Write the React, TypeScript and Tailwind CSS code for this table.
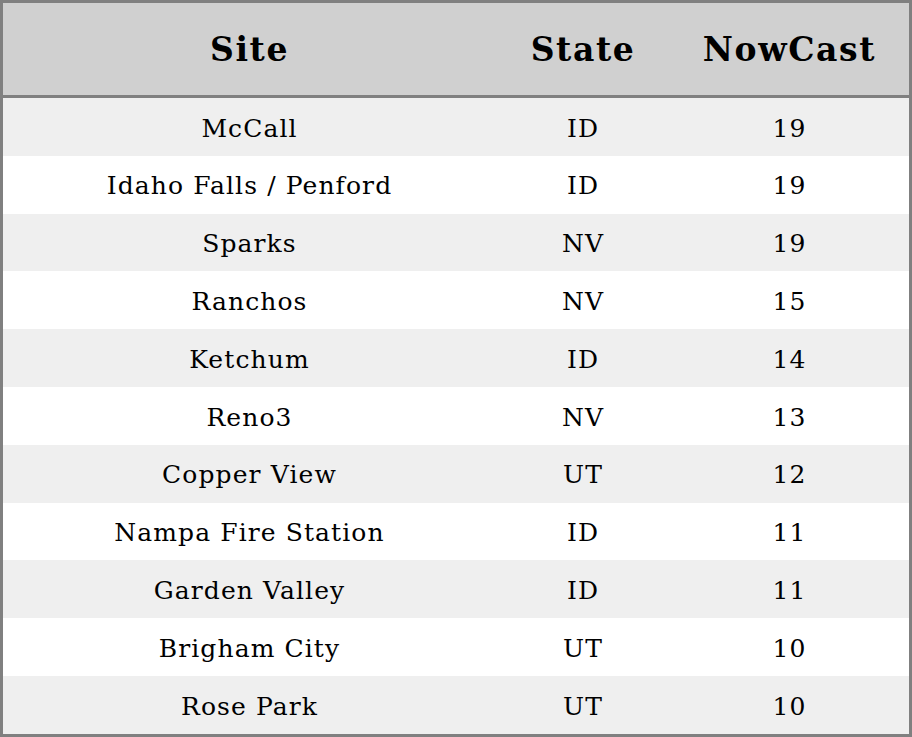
import React from "react";

const rows: [string, string, string][] = [
  ["McCall", "ID", "19"],
  ["Idaho Falls / Penford", "ID", "19"],
  ["Sparks", "NV", "19"],
  ["Ranchos", "NV", "15"],
  ["Ketchum", "ID", "14"],
  ["Reno3", "NV", "13"],
  ["Copper View", "UT", "12"],
  ["Nampa Fire Station", "ID", "11"],
  ["Garden Valley", "ID", "11"],
  ["Brigham City", "UT", "10"],
  ["Rose Park", "UT", "10"],
];

export default function App() {
  return (
    <div
      className="w-[912px] h-[737px] border-[3px] border-[#808080] bg-white text-black flex flex-col"
      style={{ fontFamily: '"DejaVu Serif", serif' }}
    >
      <div className="grid grid-cols-[493px_174px_239px] h-[95px] shrink-0 pt-[2px] bg-[#d0d0d0] border-b-[3px] border-[#808080] items-center text-[33px] font-bold tracking-[1.6px]">
        <div className="text-center">Site</div>
        <div className="text-center">State</div>
        <div className="text-center">NowCast</div>
      </div>
      {rows.map((r, i) => (
        <div
          key={i}
          className={`grid grid-cols-[493px_174px_239px] h-[57.8px] shrink-0 pt-[3px] items-center text-[25px] tracking-[1.1px] ${
            i % 2 === 0 ? "bg-[#efefef]" : "bg-white"
          }`}
        >
          <div className="text-center">{r[0]}</div>
          <div className="text-center">{r[1]}</div>
          <div className="text-center">{r[2]}</div>
        </div>
      ))}
    </div>
  );
}
